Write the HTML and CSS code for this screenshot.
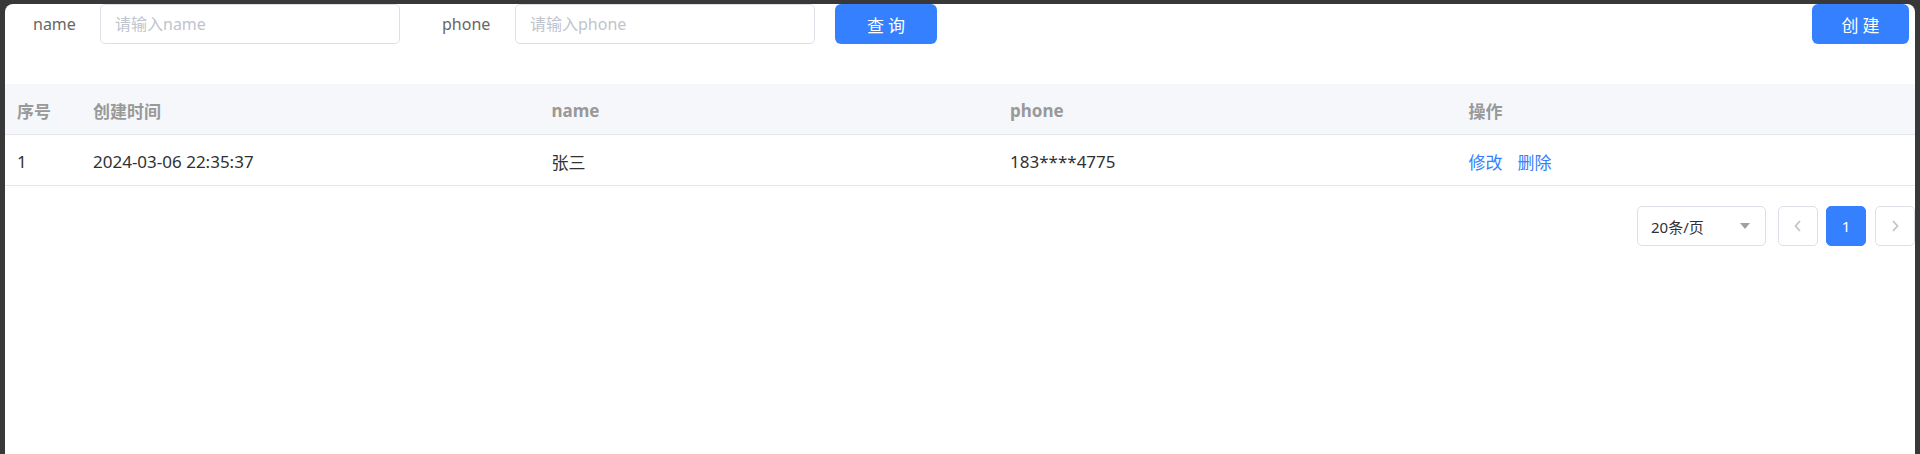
FILE: index.html
```html
<!DOCTYPE html>
<html lang="zh-CN">
<head>
<meta charset="utf-8">
<title>用户列表</title>
<link rel="stylesheet" href="styles.css">
</head>
<body>
<div class="panel">
  <div class="toolbar">
    <span class="label label-name">name</span>
    <input class="input" type="text" placeholder="请输入name">
    <span class="label label-phone">phone</span>
    <input class="input" type="text" placeholder="请输入phone">
    <button class="btn btn-search">查 询</button>
    <button class="btn btn-create">创 建</button>
  </div>

  <div class="table">
    <div class="row head">
      <div class="cell">序号</div>
      <div class="cell">创建时间</div>
      <div class="cell">name</div>
      <div class="cell">phone</div>
      <div class="cell">操作</div>
    </div>
    <div class="row body">
      <div class="cell">1</div>
      <div class="cell">2024-03-06 22:35:37</div>
      <div class="cell">张三</div>
      <div class="cell">183****4775</div>
      <div class="cell"><a class="link">修改</a><a class="link">删除</a></div>
    </div>
  </div>

  <div class="pager">
    <div class="select"><span>20条/页</span><i class="caret"></i></div>
    <button class="pbtn pbtn-prev"><svg width="8" height="12" viewBox="0 0 8 12"><polyline points="6,1 1.5,6 6,11" fill="none" stroke="#c0c4cc" stroke-width="1.8"/></svg></button>
    <button class="pbtn pbtn-active">1</button>
    <button class="pbtn pbtn-next"><svg width="8" height="12" viewBox="0 0 8 12"><polyline points="2,1 6.5,6 2,11" fill="none" stroke="#c0c4cc" stroke-width="1.8"/></svg></button>
  </div>
</div>
</body>
</html>
```

FILE: styles.css
```css
html, body {
  margin: 0;
  height: 100%;
  background: #383838;
}
body {
  padding: 4px 5px 0;
  box-sizing: border-box;
  font-family: "Noto Sans", "Noto Sans CJK SC", sans-serif;
  overflow: hidden;
}
.panel {
  background: #fff;
  border-radius: 8px 8px 0 0;
  height: 450px;
  overflow: hidden;
}
.toolbar {
  display: flex;
  align-items: center;
  height: 40px;
}
.label {
  font-size: 16px;
  color: #666;
  box-sizing: border-box;
}
.label-name {
  width: 95px;
  padding-left: 28px;
}
.label-phone {
  width: 115px;
  padding-left: 42px;
}
.input {
  width: 300px;
  height: 40px;
  box-sizing: border-box;
  border: 1px solid #dcdfe6;
  border-radius: 5px;
  padding: 0 14px;
  font-family: "Noto Sans", "Noto Sans CJK SC", sans-serif;
  font-size: 16px;
  color: #606266;
  outline: none;
}
.input::placeholder {
  color: #c0c4cc;
}
.btn {
  height: 40px;
  border: none;
  border-radius: 6px;
  background: #3480ff;
  color: #fff;
  font-family: "Noto Sans CJK SC", sans-serif;
  font-size: 17px;
  padding: 0;
}
.btn-search {
  margin-left: 20px;
  width: 102px;
}
.btn-create {
  margin-left: auto;
  margin-right: 6px;
  width: 97px;
}
.table {
  margin-top: 40px;
}
.row {
  display: grid;
  grid-template-columns: 76px repeat(4, 1fr);
  border-bottom: 1px solid #e4e7ed;
  height: 51px;
  box-sizing: border-box;
}
.row.head {
  background: #f5f7fa;
  font-weight: 700;
  color: #999;
  padding-top: 3px;
}
.row.body {
  color: #303133;
  padding-top: 2px;
}
.cell {
  display: flex;
  align-items: center;
  padding-left: 12px;
  font-size: 17px;
}
.link {
  color: #3480ff;
  margin-right: 15px;
  cursor: pointer;
}
.pager {
  display: flex;
  justify-content: flex-end;
  align-items: center;
  margin-top: 20px;
}
.select {
  width: 129px;
  height: 40px;
  box-sizing: border-box;
  border: 1px solid #dcdfe6;
  border-radius: 5px;
  display: flex;
  align-items: center;
  justify-content: space-between;
  padding: 0 15px 0 13px;
  margin-right: 12px;
  font-size: 15px;
  color: #303133;
}
.caret {
  width: 0;
  height: 0;
  border-left: 5px solid transparent;
  border-right: 5px solid transparent;
  border-top: 6px solid #a0a0a0;
}
.pbtn {
  width: 40px;
  height: 40px;
  box-sizing: border-box;
  border: 1px solid #dcdfe6;
  border-radius: 5px;
  background: #fff;
  display: flex;
  align-items: center;
  justify-content: center;
  padding: 0;
  font-family: "Noto Sans", sans-serif;
  font-size: 15px;
}
.pbtn-prev {
  margin-right: 8px;
}
.pbtn-active {
  background: #3480ff;
  border-color: #3480ff;
  color: #fff;
  margin-right: 9px;
}
```
